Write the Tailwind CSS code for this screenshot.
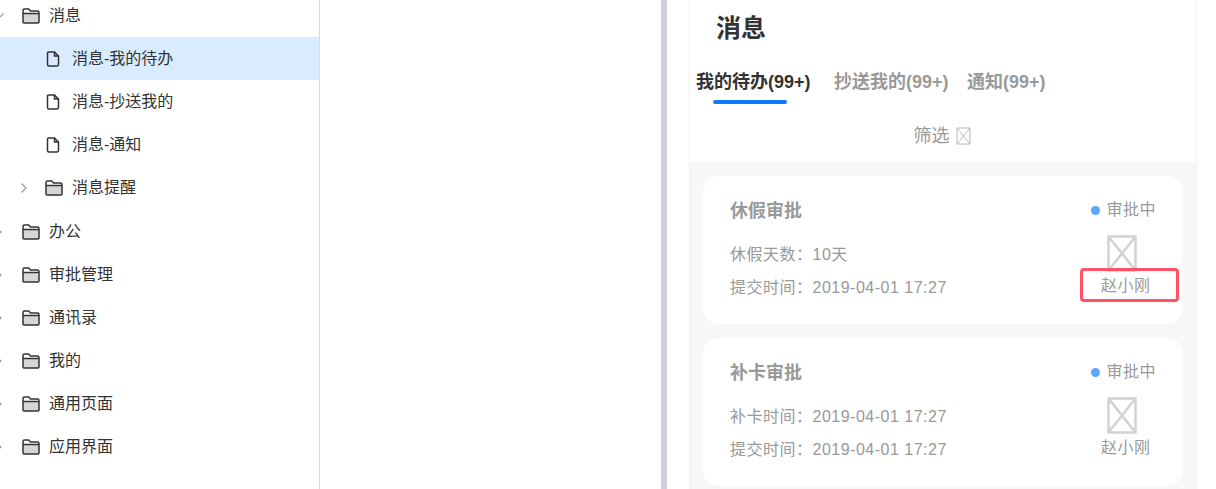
<!DOCTYPE html>
<html lang="zh-CN">
<head>
    <meta charset="UTF-8">
    <title>消息</title>
    <script src="https://cdn.jsdelivr.net/npm/@tailwindcss/browser@4"></script>
</head>
<body class="bg-white font-['Liberation_Sans','Noto_Sans_CJK_SC',sans-serif]">
    <svg width="0" height="0" class="absolute">
        <symbol id="folder" viewBox="0 0 18 16">
            <path d="M1 5h16v9a1 1 0 0 1-1 1H2a1 1 0 0 1-1-1z" fill="#d6d6d6"/>
            <path d="M1 14V2.500A1.500 1.500 0 0 1 2.500 1h4.200l1.800 2H15.500A1.500 1.500 0 0 1 17 4.500V14a1 1 0 0 1-1 1H2a1 1 0 0 1-1-1zM1 5.500h16" fill="none" stroke="#333" stroke-width="1.500"/>
        </symbol>
        <symbol id="file" viewBox="0 0 14 16">
            <path d="M2.500 1H8.500L12.500 5V13.500A1.500 1.500 0 0 1 11 15H3A1.500 1.500 0 0 1 1.500 13.500V2A1 1 0 0 1 2.500 1ZM8.500 1V5H12.500" fill="none" stroke="#333" stroke-width="1.500"/>
        </symbol>
        <symbol id="chevron" viewBox="0 0 8 12">
            <path d="M1.500 1.500 6 6 1.500 10.500" fill="none" stroke="#999" stroke-width="1.200"/>
        </symbol>
        <symbol id="broken" viewBox="0 0 30 37">
            <path d="M1.500 1.500H28.500V35.500H1.500ZM1.500 1.500 28.500 35.500M28.500 1.500 1.500 35.500" fill="none" stroke="#d2d2d2" stroke-width="2.500"/>
        </symbol>
    </svg>

    <div class="flex h-[489px] w-[1216px] overflow-hidden">
        <!-- tree -->
        <aside class="w-[320px] shrink-0 border-r border-[#dcdcdc] text-base text-[#333]">
            <ul class="-mt-[6px]">
                <li class="flex h-[43.2px] items-center">
                    <svg width="8" height="12" class="-ml-[5px] rotate-90"><use href="#chevron"/></svg>
                    <svg width="18" height="16" class="ml-[19px]"><use href="#folder"/></svg>
                    <span class="ml-[9px]">消息</span>
                </li>
                <li class="flex h-[43.2px] items-center bg-[#d9ebff] pl-[46px]">
                    <svg width="14" height="16"><use href="#file"/></svg>
                    <span class="ml-[12px]">消息-我的待办</span>
                </li>
                <li class="flex h-[43.2px] items-center pl-[46px]">
                    <svg width="14" height="16"><use href="#file"/></svg>
                    <span class="ml-[12px]">消息-抄送我的</span>
                </li>
                <li class="flex h-[43.2px] items-center pl-[46px]">
                    <svg width="14" height="16"><use href="#file"/></svg>
                    <span class="ml-[12px]">消息-通知</span>
                </li>
                <li class="flex h-[43.2px] items-center pl-[20px]">
                    <svg width="8" height="12"><use href="#chevron"/></svg>
                    <svg width="18" height="16" class="ml-[17px]"><use href="#folder"/></svg>
                    <span class="ml-[9px]">消息提醒</span>
                </li>
                <li class="flex h-[43.2px] items-center">
                    <svg width="8" height="12" class="-ml-[5px]"><use href="#chevron"/></svg>
                    <svg width="18" height="16" class="ml-[19px]"><use href="#folder"/></svg>
                    <span class="ml-[9px]">办公</span>
                </li>
                <li class="flex h-[43.2px] items-center">
                    <svg width="8" height="12" class="-ml-[5px]"><use href="#chevron"/></svg>
                    <svg width="18" height="16" class="ml-[19px]"><use href="#folder"/></svg>
                    <span class="ml-[9px]">审批管理</span>
                </li>
                <li class="flex h-[43.2px] items-center">
                    <svg width="8" height="12" class="-ml-[5px]"><use href="#chevron"/></svg>
                    <svg width="18" height="16" class="ml-[19px]"><use href="#folder"/></svg>
                    <span class="ml-[9px]">通讯录</span>
                </li>
                <li class="flex h-[43.2px] items-center">
                    <svg width="8" height="12" class="-ml-[5px]"><use href="#chevron"/></svg>
                    <svg width="18" height="16" class="ml-[19px]"><use href="#folder"/></svg>
                    <span class="ml-[9px]">我的</span>
                </li>
                <li class="flex h-[43.2px] items-center">
                    <svg width="8" height="12" class="-ml-[5px]"><use href="#chevron"/></svg>
                    <svg width="18" height="16" class="ml-[19px]"><use href="#folder"/></svg>
                    <span class="ml-[9px]">通用页面</span>
                </li>
                <li class="flex h-[43.2px] items-center">
                    <svg width="8" height="12" class="-ml-[5px]"><use href="#chevron"/></svg>
                    <svg width="18" height="16" class="ml-[19px]"><use href="#folder"/></svg>
                    <span class="ml-[9px]">应用界面</span>
                </li>
            </ul>
        </aside>

        <!-- empty middle + splitter -->
        <div class="w-[341px] shrink-0"></div>
        <div class="w-[6px] shrink-0 bg-[#d0d0e0]"></div>

        <!-- phone panel -->
        <main class="ml-[22px] flex w-[508px] shrink-0 flex-col border-x border-[#f2f2f2]">
            <h1 class="h-[69px] pl-[26px] pt-[10px] text-[25px] font-bold leading-[36px] text-[#333]">消息</h1>
            <nav class="flex pl-[6px] text-lg font-bold text-[#999]">
                <div class="w-[138px]">
                    <div class="h-[26px] leading-[26px] text-[#333]">我的待办(99+)</div>
                    <div class="ml-[17px] mt-[5px] h-[4px] w-[74px] rounded-full bg-[#0a7aff]"></div>
                </div>
                <div class="h-[26px] w-[133px] leading-[26px]">抄送我的(99+)</div>
                <div class="h-[26px] leading-[26px]">通知(99+)</div>
            </nav>
            <div class="flex h-[58px] items-center justify-center pr-[2px] pt-[5px] text-lg text-[#999]">
                筛选
                <svg width="15" height="18" viewBox="0 0 15 18" class="ml-[6px]"><path d="M1 1H14V17H1ZM1 1 14 17M14 1 1 17" fill="none" stroke="#b8b8b8"/></svg>
            </div>

            <section class="flex flex-1 flex-col gap-[14px] bg-[#f7f7f7] px-[13px] pt-[14px]">
                <article class="relative flex h-[148px] shrink-0 justify-between rounded-2xl bg-white pl-[27px] pr-[27px] text-base tracking-[0.5px] text-[#999]">
                    <div>
                        <h2 class="mt-[22px] text-lg font-bold leading-[26px] tracking-normal">休假审批</h2>
                        <p class="mt-[19px] leading-[24px]">休假天数：10天</p>
                        <p class="mt-[9px] leading-[24px]">提交时间：2019-04-01 17:27</p>
                    </div>
                    <div class="flex flex-col items-end">
                        <div class="mt-[22px] flex h-[24px] items-center">
                            <span class="mr-[6px] h-[9px] w-[9px] rounded-full bg-[#5ca6ff]"></span>审批中
                        </div>
                        <div class="mr-[5px] mt-[13px] w-[50px]">
                            <svg width="30" height="37" class="ml-[6px]"><use href="#broken"/></svg>
                            <div class="mt-[2px] whitespace-nowrap leading-[24px]">赵小刚</div>
                        </div>
                    </div>
                    <div class="absolute left-[377px] top-[92px] h-[34px] w-[99px] rounded-[4px] border-[3px] border-[#ff5468]"></div>
                </article>
                <article class="flex h-[148px] shrink-0 justify-between rounded-2xl bg-white pl-[27px] pr-[27px] text-base tracking-[0.5px] text-[#999]">
                    <div>
                        <h2 class="mt-[22px] text-lg font-bold leading-[26px] tracking-normal">补卡审批</h2>
                        <p class="mt-[19px] leading-[24px]">补卡时间：2019-04-01 17:27</p>
                        <p class="mt-[9px] leading-[24px]">提交时间：2019-04-01 17:27</p>
                    </div>
                    <div class="flex flex-col items-end">
                        <div class="mt-[22px] flex h-[24px] items-center">
                            <span class="mr-[6px] h-[9px] w-[9px] rounded-full bg-[#5ca6ff]"></span>审批中
                        </div>
                        <div class="mr-[5px] mt-[13px] w-[50px]">
                            <svg width="30" height="37" class="ml-[6px]"><use href="#broken"/></svg>
                            <div class="mt-[2px] whitespace-nowrap leading-[24px]">赵小刚</div>
                        </div>
                    </div>
                </article>
            </section>
        </main>
    </div>
</body>
</html>
